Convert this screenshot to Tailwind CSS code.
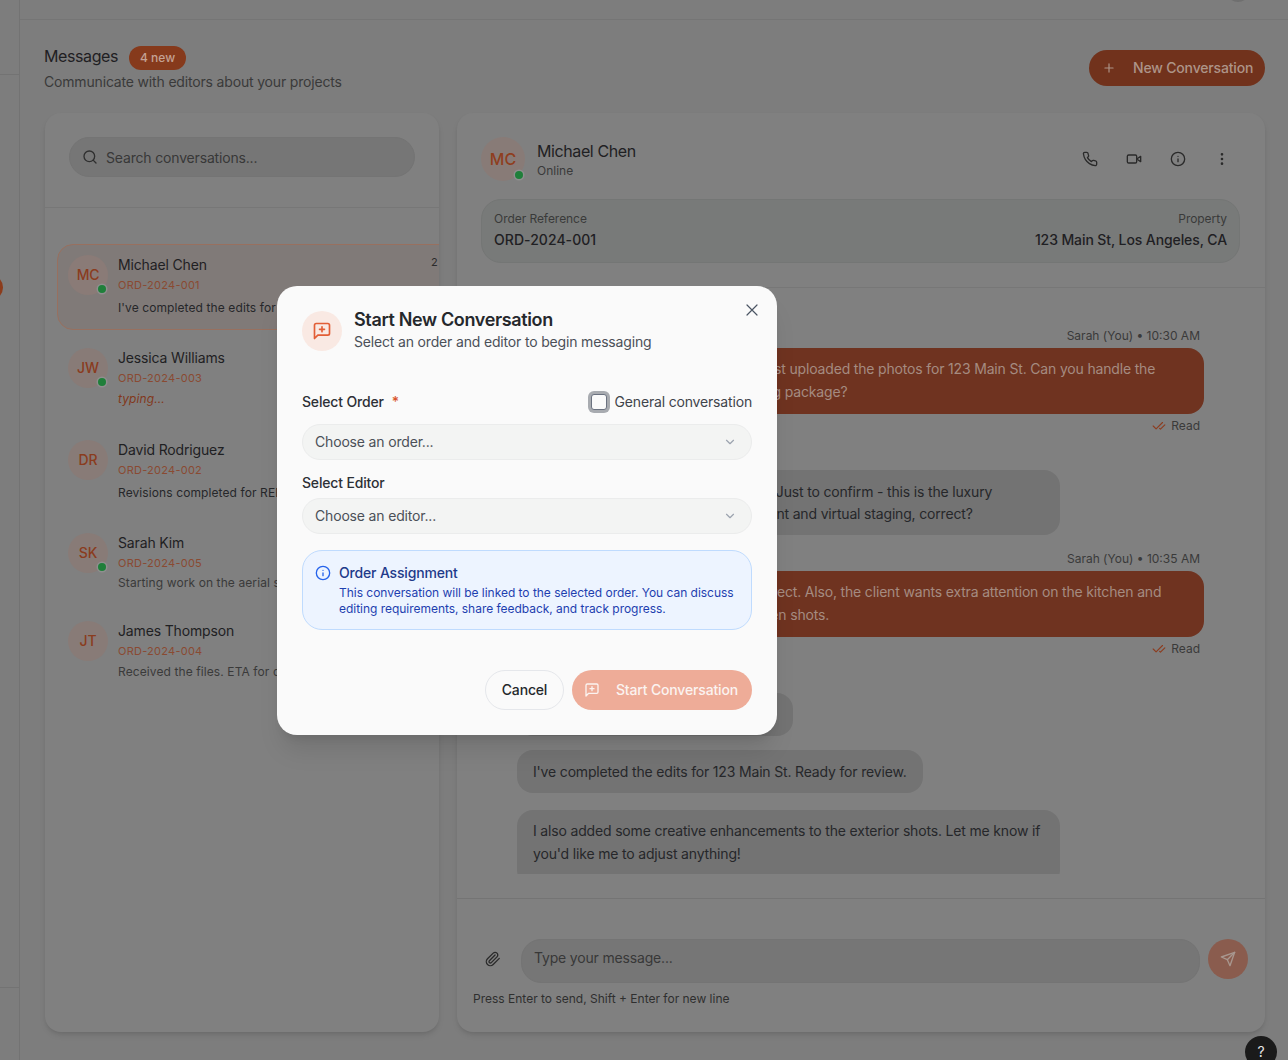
<!DOCTYPE html>
<html lang="en">
<head>
<meta charset="utf-8">
<title>Messages</title>
<script src="https://cdn.jsdelivr.net/npm/@tailwindcss/browser@4"></script>
</head>
<body class="m-0">
<div class="relative w-[1288px] h-[1060px] overflow-hidden flex bg-[#7d7d7d] font-['Inter','Liberation_Sans',sans-serif] text-[#1f2023] tracking-[-0.17px]">
  <!-- sidebar -->
  <aside class="relative w-[20px] shrink-0 h-full border-r border-[#737373] overflow-hidden">
    <div class="h-[75px] border-b border-[#737373]"></div>
    <div class="absolute -left-[22px] top-[275px] w-[25px] h-[25px] rounded-full bg-[#8c3c1c]"></div>
    <div class="absolute left-0 right-0 top-[987px] border-t border-[#737373]"></div>
  </aside>
  <div class="flex-1 min-w-0 relative">
    <div class="relative h-[20px] border-b border-[#757575]">
      <div class="absolute left-[1206px] -top-[22px] w-[24px] h-[24px] rounded-full bg-[#6f6f6f]"></div>
    </div>
    <div class="pl-[24px] pr-[23px]">
      <!-- heading -->
      <div class="flex justify-between items-start h-[93px]">
        <div class="pt-[26px]">
          <div class="flex items-center gap-[11px] h-[24px]">
            <h1 class="text-base font-normal leading-6 tracking-[-0.4px] mb-[4px]">Messages</h1>
            <span class="w-[57px] h-[24px] rounded-full bg-[#863a1c] text-[#c4a294] text-xs font-medium tracking-[0px] flex items-center justify-center">4 new</span>
          </div>
          <p class="text-sm leading-5 mt-[2px] text-[#3a3a3a]">Communicate with editors about your projects</p>
        </div>
        <button class="mt-[30px] w-[176px] h-[36px] rounded-full bg-[#71321c] text-[#ad9488] text-sm font-medium flex items-center pl-[13px] gap-[17px]">
          <svg class="w-[14px] h-[14px]" viewBox="0 0 24 24" fill="none" stroke="currentColor" stroke-width="2" stroke-linecap="round"><path d="M5 12h14"/><path d="M12 5v14"/></svg>
          New Conversation
        </button>
      </div>
      <div class="flex gap-[18px] h-[919px] pl-[1px]">
        <!-- list card -->
        <section class="w-[394px] shrink-0 h-full rounded-[16px] bg-[#808080] shadow-md overflow-hidden">
          <div class="h-[95px] border-b border-[#777777] pt-[24px] px-[24px]">
            <div class="h-[40px] rounded-full bg-[#767676] border border-[#747474] flex items-center pl-[12px] gap-[8px] text-sm text-[#383838]">
              <svg class="w-[16px] h-[16px] text-[#2f2f2f]" viewBox="0 0 24 24" fill="none" stroke="currentColor" stroke-width="2" stroke-linecap="round" stroke-linejoin="round"><circle cx="11" cy="11" r="8"/><path d="m21 21-4.3-4.3"/></svg>
              <span class="pt-[2px]">Search conversations...</span>
            </div>
          </div>
          <div class="w-[420px] ml-[12px] pt-[36px]">
            <div class="relative h-[86px] rounded-[16px] border border-[#98705f] bg-[#807a78] pl-[10px] pt-[10px] flex gap-[10px]">
              <div class="relative w-[40px] h-[40px] shrink-0 rounded-full bg-[#8a7b77] text-[#8a3c1e] text-sm font-medium flex items-center justify-center">MC<span class="absolute right-[2px] bottom-[2px] w-[8px] h-[8px] rounded-full bg-[#1f7f3a] ring-[1.5px] ring-[#8f8f8f]"></span></div>
              <div class="min-w-0 whitespace-nowrap">
                <div class="text-sm leading-5 tracking-[-0.15px]">Michael Chen</div>
                <div class="text-[11px] leading-4 mt-[2px] text-[#8a4a32] tracking-[0.25px]">ORD-2024-001</div>
                <div class="text-xs leading-4 mt-[7px] text-[#26272a] tracking-[0.1px]">I've completed the edits for 123 Main St.</div>
              </div>
              <span class="absolute left-[373px] top-[9px] text-[11px] leading-4 text-[#2b2b2b]">2</span>
            </div>
            <div class="flex gap-[10px] pl-[11px] mt-[18px] h-[75px]">
              <div class="relative w-[40px] h-[40px] shrink-0 rounded-full bg-[#887b77] text-[#8a3c1e] text-sm font-medium flex items-center justify-center">JW<span class="absolute right-[2px] bottom-[2px] w-[8px] h-[8px] rounded-full bg-[#1f7f3a] ring-[1.5px] ring-[#8f8f8f]"></span></div>
              <div class="whitespace-nowrap">
                <div class="text-sm leading-5 tracking-[-0.15px]">Jessica Williams</div>
                <div class="text-[11px] leading-4 mt-[2px] text-[#8a4a32] tracking-[0.25px]">ORD-2024-003</div>
                <div class="text-xs leading-4 mt-[5px] italic text-[#82381c] tracking-[0.1px]">typing...</div>
              </div>
            </div>
            <div class="flex gap-[10px] pl-[11px] mt-[17px] h-[75px]">
              <div class="w-[40px] h-[40px] shrink-0 rounded-full bg-[#887b77] text-[#8a3c1e] text-sm font-medium flex items-center justify-center">DR</div>
              <div class="whitespace-nowrap">
                <div class="text-sm leading-5 tracking-[-0.15px]">David Rodriguez</div>
                <div class="text-[11px] leading-4 mt-[2px] text-[#8a4a32] tracking-[0.25px]">ORD-2024-002</div>
                <div class="text-xs leading-4 mt-[7px] text-[#26272a] tracking-[0.1px]">Revisions completed for REF-2024-002</div>
              </div>
            </div>
            <div class="flex gap-[10px] pl-[11px] mt-[18px] h-[70px]">
              <div class="relative w-[40px] h-[40px] shrink-0 rounded-full bg-[#887b77] text-[#8a3c1e] text-sm font-medium flex items-center justify-center">SK<span class="absolute right-[2px] bottom-[2px] w-[8px] h-[8px] rounded-full bg-[#1f7f3a] ring-[1.5px] ring-[#8f8f8f]"></span></div>
              <div class="whitespace-nowrap">
                <div class="text-sm leading-5 tracking-[-0.15px]">Sarah Kim</div>
                <div class="text-[11px] leading-4 mt-[2px] text-[#8a4a32] tracking-[0.25px]">ORD-2024-005</div>
                <div class="text-xs leading-4 mt-[4px] text-[#3a3a3a] tracking-[0.1px]">Starting work on the aerial shots today</div>
              </div>
            </div>
            <div class="flex gap-[10px] pl-[11px] mt-[18px] h-[70px]">
              <div class="w-[40px] h-[40px] shrink-0 rounded-full bg-[#887b77] text-[#8a3c1e] text-sm font-medium flex items-center justify-center">JT</div>
              <div class="whitespace-nowrap">
                <div class="text-sm leading-5 tracking-[-0.15px]">James Thompson</div>
                <div class="text-[11px] leading-4 mt-[2px] text-[#8a4a32] tracking-[0.25px]">ORD-2024-004</div>
                <div class="text-xs leading-4 mt-[5px] text-[#3a3a3a] tracking-[0.1px]">Received the files. ETA for completion</div>
              </div>
            </div>
          </div>
        </section>
        <!-- chat card -->
        <section class="w-[808px] shrink-0 h-full rounded-[16px] bg-[#808080] shadow-md overflow-hidden flex flex-col">
          <div class="h-[175px] shrink-0 border-b border-[#777777] px-[24px] pt-[24px]">
            <div class="flex items-start h-[44px]">
              <div class="relative w-[44px] h-[44px] rounded-full bg-[#887b77] text-[#8f3e1e] text-base font-medium tracking-[0px] flex items-center justify-center">MC<span class="absolute right-[2px] bottom-[2px] w-[8px] h-[8px] rounded-full bg-[#1f7f3a] ring-[1.5px] ring-[#8f8f8f]"></span></div>
              <div class="ml-[12px]">
                <div class="text-base leading-6 tracking-[-0.4px] mt-[2px]">Michael Chen</div>
                <div class="text-xs leading-4 text-[#3a3a3a] tracking-[0px]">Online</div>
              </div>
              <div class="ml-auto mr-[11px] mt-[14px] flex gap-[28px] text-[#2a2a2a]">
                <svg class="w-[16px] h-[16px]" viewBox="0 0 24 24" fill="none" stroke="currentColor" stroke-width="2" stroke-linecap="round" stroke-linejoin="round"><path d="M22 16.92v3a2 2 0 0 1-2.18 2 19.79 19.79 0 0 1-8.63-3.07 19.5 19.5 0 0 1-6-6 19.79 19.79 0 0 1-3.07-8.67A2 2 0 0 1 4.11 2h3a2 2 0 0 1 2 1.72 12.84 12.84 0 0 0 .7 2.81 2 2 0 0 1-.45 2.11L8.09 9.91a16 16 0 0 0 6 6l1.27-1.27a2 2 0 0 1 2.11-.45 12.84 12.84 0 0 0 2.81.7A2 2 0 0 1 22 16.92z"/></svg>
                <svg class="w-[16px] h-[16px]" viewBox="0 0 24 24" fill="none" stroke="currentColor" stroke-width="2" stroke-linecap="round" stroke-linejoin="round"><path d="m22 8-6 4 6 4V8Z"/><rect x="2" y="6" width="14" height="12" rx="2"/></svg>
                <svg class="w-[16px] h-[16px]" viewBox="0 0 24 24" fill="none" stroke="currentColor" stroke-width="2" stroke-linecap="round" stroke-linejoin="round"><circle cx="12" cy="12" r="10"/><path d="M12 16v-4"/><path d="M12 8h.01"/></svg>
                <svg class="w-[16px] h-[16px]" viewBox="0 0 24 24" fill="none" stroke="currentColor" stroke-width="2" stroke-linecap="round" stroke-linejoin="round"><circle cx="12" cy="12" r="1"/><circle cx="12" cy="5" r="1"/><circle cx="12" cy="19" r="1"/></svg>
              </div>
            </div>
            <div class="mt-[18px] h-[64px] w-[759px] rounded-[20px] bg-[#787a79] border border-[#747675] px-[12px] pt-[11px] flex justify-between">
              <div>
                <div class="text-xs leading-4 text-[#3a3a3a] tracking-[-0.05px]">Order Reference</div>
                <div class="text-sm leading-5 mt-[3px] font-medium tracking-[0.05px]">ORD-2024-001</div>
              </div>
              <div class="text-right">
                <div class="text-xs leading-4 text-[#3a3a3a] tracking-[-0.05px]">Property</div>
                <div class="text-sm leading-5 mt-[3px] font-medium tracking-[-0.1px]">123 Main St, Los Angeles, CA</div>
              </div>
            </div>
          </div>
          <div class="h-[586px] shrink-0 overflow-hidden pl-[60px] pr-[61px] pt-[40px] text-sm whitespace-nowrap">
            <div class="text-xs leading-4 text-right pr-[4px] text-[#3a3a3a] tracking-[0px]">Sarah (You) • 10:30 AM</div>
            <div class="ml-[144px] mt-[4px] h-[66px] w-[543px] rounded-[16px] bg-[#6f3320] text-[#a58b80] leading-[23px] pl-[19px] pt-[9px]">Hi Michael, I just uploaded the photos for 123 Main St. Can you handle the<br><span class="ml-[10px]">virtual staging package?</span></div>
            <div class="mt-[4px] flex items-center justify-end gap-[5px] pr-[4px] text-xs leading-4 text-[#3a3a3a] tracking-[0px]">
              <svg class="w-[14px] h-[14px] text-[#8c3d20]" viewBox="0 0 24 24" fill="none" stroke="currentColor" stroke-width="2" stroke-linecap="round" stroke-linejoin="round"><path d="M18 6 7 17l-5-5"/><path d="m22 10-7.5 7.5L13 16"/></svg>Read
            </div>
            <div class="mt-[36px] h-[65px] w-[543px] rounded-[16px] bg-[#737373] text-[#26272a] leading-[22px] pl-[27px] py-[11px]">Got it, thanks for the photos, Sarah. Just to confirm - this is the luxury<br>package with pro photo enhancement and virtual staging, correct?</div>
            <div class="mt-[16px] text-xs leading-4 text-right pr-[4px] text-[#3a3a3a] tracking-[0px]">Sarah (You) • 10:35 AM</div>
            <div class="ml-[144px] mt-[4px] h-[66px] w-[543px] rounded-[16px] bg-[#6f3320] text-[#a58b80] leading-[23px] pl-[16px] pt-[9px]">Yes, that is correct. Also, the client wants extra attention on the kitchen and<br>backyard garden shots.</div>
            <div class="mt-[4px] flex items-center justify-end gap-[5px] pr-[4px] text-xs leading-4 text-[#3a3a3a] tracking-[0px]">
              <svg class="w-[14px] h-[14px] text-[#8c3d20]" viewBox="0 0 24 24" fill="none" stroke="currentColor" stroke-width="2" stroke-linecap="round" stroke-linejoin="round"><path d="M18 6 7 17l-5-5"/><path d="m22 10-7.5 7.5L13 16"/></svg>Read
            </div>
            <div class="mt-[36px] h-[43px] w-[276px] rounded-[16px] bg-[#737373]"></div>
            <div class="mt-[15px] w-fit h-[43px] rounded-[16px] bg-[#737373] text-[#26272a] leading-[22px] px-[16px] flex items-center -translate-y-[1px]">I've completed the edits for 123 Main St. Ready for review.</div>
            <div class="mt-[16px] w-[543px] h-[76px] rounded-[16px] bg-[#737373] text-[#26272a] leading-[23px] px-[16px] py-[9px]">I also added some creative enhancements to the exterior shots. Let me know if<br>you'd like me to adjust anything!</div>
          </div>
          <div class="h-[25px] shrink-0 border-b-[1.5px] border-[#747474]"></div>
          <div class="px-[16px] pt-[40px]">
            <div class="flex items-start">
              <div class="w-[40px] h-[40px] flex items-center justify-center">
                <svg class="w-[16px] h-[16px] text-[#2a2a2a]" viewBox="0 0 24 24" fill="none" stroke="currentColor" stroke-width="2" stroke-linecap="round" stroke-linejoin="round"><path d="m21.44 11.05-9.19 9.19a6 6 0 0 1-8.49-8.49l8.57-8.57A4 4 0 1 1 18 8.84l-8.59 8.57a2 2 0 0 1-2.83-2.83l8.49-8.48"/></svg>
              </div>
              <div class="ml-[8px] w-[679px] h-[44px] rounded-[20px] bg-[#767676] border border-[#747474] pl-[12px] pt-[8px] text-sm leading-5 text-[#383838]">Type your message...</div>
              <div class="ml-[8px] w-[40px] h-[40px] rounded-full bg-[#8a5c4e] flex items-center justify-center">
                <svg class="w-[16px] h-[16px] text-[#a8978f]" viewBox="0 0 24 24" fill="none" stroke="currentColor" stroke-width="2" stroke-linecap="round" stroke-linejoin="round"><path d="m22 2-7 20-4-9-9-4Z"/><path d="M22 2 11 13"/></svg>
              </div>
            </div>
            <p class="text-xs leading-4 mt-[8px] text-[#2f2f2f] tracking-[0px]">Press Enter to send, Shift + Enter for new line</p>
          </div>
        </section>
      </div>
    </div>
  </div>
  <!-- help bubble -->
  <div class="absolute left-[1245px] top-[1036px] w-[32px] h-[32px] rounded-full bg-[#1a1a1a] text-[#e5e5e5] text-sm flex justify-center pt-[6px] leading-5">?</div>
  <!-- modal -->
  <div class="absolute left-[277px] top-[286px] w-[500px] h-[449px] rounded-[20px] bg-[#fafafa] shadow-xl pl-[25px] pr-[25px] pt-[25px]">
    <button class="absolute right-[19px] top-[18px] text-[#4b5563]">
      <svg class="w-[12px] h-[12px]" viewBox="0 0 12 12" fill="none" stroke="currentColor" stroke-width="1.2" stroke-linecap="round"><path d="M1 1l10 10M11 1 1 11"/></svg>
    </button>
    <div class="flex gap-[12px] items-start">
      <div class="w-[40px] h-[40px] rounded-full bg-[#f9e9e3] text-[#e25e36] flex items-center justify-center shrink-0">
        <svg class="w-[20px] h-[20px]" viewBox="0 0 24 24" fill="none" stroke="currentColor" stroke-width="2" stroke-linecap="round" stroke-linejoin="round"><path d="M21 15a2 2 0 0 1-2 2H7l-4 4V5a2 2 0 0 1 2-2h14a2 2 0 0 1 2 2z"/><path d="M12 7v6"/><path d="M9 10h6"/></svg>
      </div>
      <div>
        <h2 class="text-lg leading-[24px] font-semibold text-[#25282c] -mt-[3px] tracking-[-0.36px]">Start New Conversation</h2>
        <p class="text-sm leading-5 text-[#4b5058]">Select an order and editor to begin messaging</p>
      </div>
    </div>
    <div class="mt-[39px] flex items-center justify-between h-[22px]">
      <div class="text-sm font-medium text-[#2d3036] flex gap-[8px]">Select Order <span class="text-[#d9542b]">*</span></div>
      <label class="flex items-center gap-[6px] text-sm text-[#3f444b]">
        <span class="w-[16px] h-[16px] rounded-[3px] border border-[#6b7280] bg-[#fafafa] ring-[3px] ring-[#a8abb0] mr-[2px]"></span>General conversation
      </label>
    </div>
    <div class="mt-[11px] h-[36px] rounded-full bg-[#f3f4f3] border border-[#ebecec] flex items-center justify-between pl-[12px] pr-[14px] text-sm text-[#4b5058]">
      Choose an order...
      <svg class="w-[14px] h-[14px] text-[#9ca3af]" viewBox="0 0 24 24" fill="none" stroke="currentColor" stroke-width="2" stroke-linecap="round" stroke-linejoin="round"><path d="m6 9 6 6 6-6"/></svg>
    </div>
    <div class="mt-[13px] text-sm leading-5 font-medium text-[#2d3036]">Select Editor</div>
    <div class="mt-[5px] h-[36px] rounded-full bg-[#f3f4f3] border border-[#ebecec] flex items-center justify-between pl-[12px] pr-[14px] text-sm text-[#4b5058]">
      Choose an editor...
      <svg class="w-[14px] h-[14px] text-[#9ca3af]" viewBox="0 0 24 24" fill="none" stroke="currentColor" stroke-width="2" stroke-linecap="round" stroke-linejoin="round"><path d="m6 9 6 6 6-6"/></svg>
    </div>
    <div class="mt-[16px] h-[80px] rounded-[20px] bg-[#edf4ff] border border-[#bfdbfe] pl-[12px] pt-[12px] flex gap-[8px]">
      <svg class="w-[16px] h-[16px] mt-[2px] shrink-0 text-[#2563eb]" viewBox="0 0 24 24" fill="none" stroke="currentColor" stroke-width="2" stroke-linecap="round" stroke-linejoin="round"><circle cx="12" cy="12" r="10"/><path d="M12 16v-4"/><path d="M12 8h.01"/></svg>
      <div>
        <div class="text-sm leading-5 font-medium text-[#1e3a8a]">Order Assignment</div>
        <p class="text-xs leading-4 mt-[2px] text-[#1e40af] tracking-[-0.03px]">This conversation will be linked to the selected order. You can discuss<br>editing requirements, share feedback, and track progress.</p>
      </div>
    </div>
    <div class="mt-[40px] flex justify-end gap-[8px]">
      <button class="w-[79px] h-[40px] rounded-full border border-[#e5e7eb] bg-[#fafafa] text-sm font-medium text-[#25282c]">Cancel</button>
      <button class="w-[180px] h-[40px] rounded-full bg-[#eeac98] text-[#fbf3f0] text-sm font-medium flex items-center pl-[12px] gap-[16px]">
        <svg class="w-[16px] h-[16px]" viewBox="0 0 24 24" fill="none" stroke="currentColor" stroke-width="2" stroke-linecap="round" stroke-linejoin="round"><path d="M21 15a2 2 0 0 1-2 2H7l-4 4V5a2 2 0 0 1 2-2h14a2 2 0 0 1 2 2z"/><path d="M12 7v6"/><path d="M9 10h6"/></svg>
        Start Conversation
      </button>
    </div>
  </div>
</div>
</body>
</html>
